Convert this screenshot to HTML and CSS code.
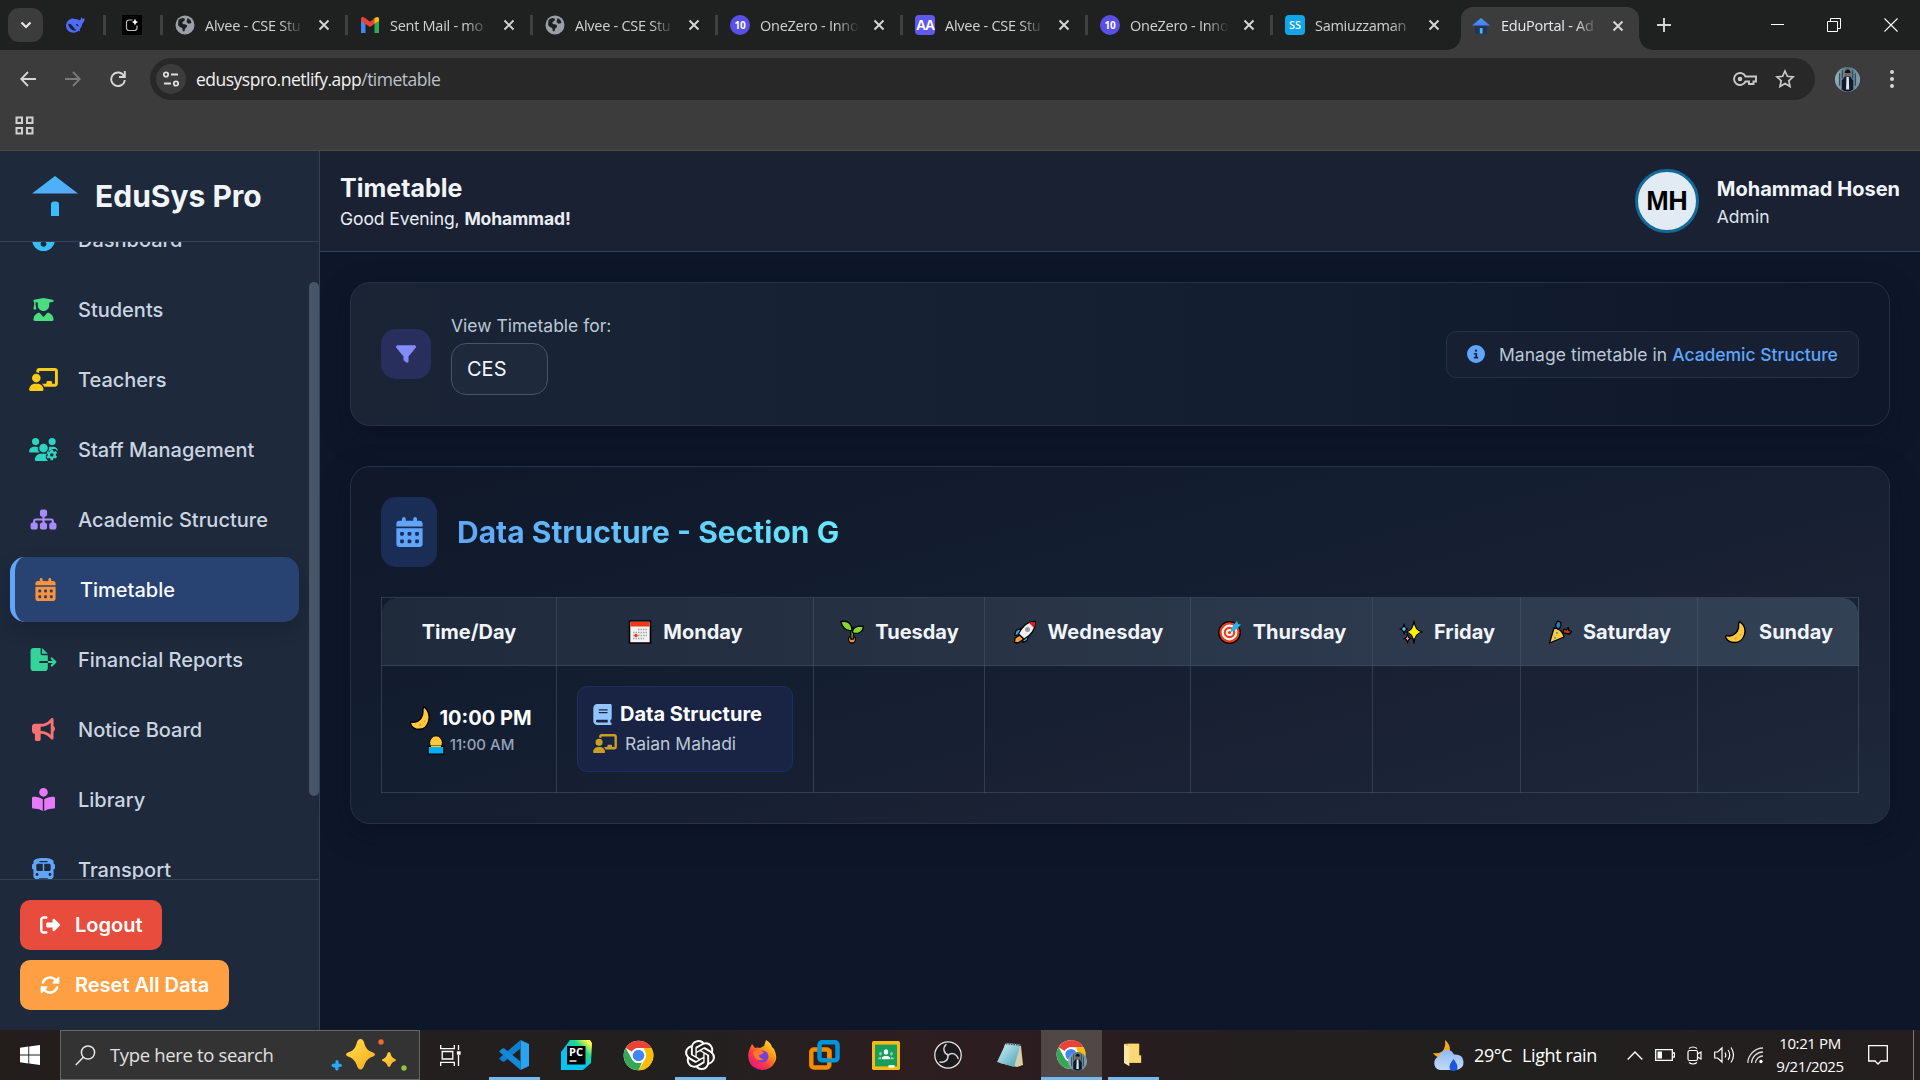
FILE: index.html
```html
<!DOCTYPE html>
<html lang="en">
<head>
<meta charset="utf-8">
<title>EduPortal - Admin</title>
<link rel="stylesheet" href="styles.css">
</head>
<body>
<svg class="sprite" aria-hidden="true">
<defs>
<linearGradient id="g-roof" x1="0" y1="0" x2="1" y2="1"><stop offset="0" stop-color="#38bdf8"/><stop offset="1" stop-color="#60a5fa"/></linearGradient>
<linearGradient id="g-house" x1="0" y1="0" x2="0" y2="1"><stop offset="0" stop-color="#3b9bf8"/><stop offset="1" stop-color="#4f7df8"/></linearGradient>
<linearGradient id="g-gold" x1="0" y1="0" x2="1" y2="1"><stop offset="0" stop-color="#ffe14a"/><stop offset="1" stop-color="#f9a81c"/></linearGradient>
<linearGradient id="g-pc" x1="0" y1="1" x2="1" y2="0"><stop offset=".45" stop-color="#07c3f2"/><stop offset=".7" stop-color="#21d789"/><stop offset=".9" stop-color="#fcf84a"/></linearGradient>
<linearGradient id="g-fox" x1="1" y1="0" x2=".2" y2="1"><stop offset="0" stop-color="#fff44f"/><stop offset=".4" stop-color="#ff980e"/><stop offset=".7" stop-color="#ff3647"/><stop offset="1" stop-color="#e31587"/></linearGradient>
<linearGradient id="g-cloud" x1="0" y1="0" x2="0" y2="1"><stop offset="0" stop-color="#8fbaf4"/><stop offset="1" stop-color="#c3dafc"/></linearGradient>
<linearGradient id="g-note" x1="0" y1="0" x2="1" y2="1"><stop offset="0" stop-color="#d9f3f8"/><stop offset="1" stop-color="#3f9fb6"/></linearGradient>
<linearGradient id="g-photo" x1="0" y1="0" x2="1" y2="0"><stop offset="0" stop-color="#9db4bd"/><stop offset=".5" stop-color="#4c6f80"/><stop offset="1" stop-color="#86a3ae"/></linearGradient>

<symbol id="i-gauge" viewBox="0 0 512 512"><path fill-rule="evenodd" d="M256 0a256 256 0 1 1 0 512A256 256 0 1 1 256 0zM232 352V150h48V296a64 64 0 1 1-48 0z"/></symbol>
<symbol id="i-student" viewBox="0 0 448 512"><path d="M219.3 .5c3.1-.6 6.3-.6 9.4 0l200 40C439.9 42.7 448 52.6 448 64s-8.1 21.3-19.3 23.5L352 102.9V160c0 70.7-57.3 128-128 128s-128-57.3-128-128V102.9L48 93.3v65.1l15.7 78.4c.9 4.7-.3 9.6-3.3 13.3s-7.6 5.9-12.4 5.9H16c-4.8 0-9.3-2.1-12.4-5.9s-4.3-8.6-3.3-13.3L16 158.4V86.6C6.5 83.3 0 74.3 0 64C0 52.6 8.1 42.7 19.3 40.5l200-40zM111.9 327.7c10.5-3.4 21.8 .4 29.4 8.5l71 75.5c6.3 6.7 17 6.7 23.3 0l71-75.5c7.6-8.1 18.9-11.9 29.4-8.5C401 348.6 448 409.4 448 481.3c0 17-13.8 30.7-30.7 30.7H30.7C13.8 512 0 498.2 0 481.3c0-71.9 47-132.7 111.9-153.6z"/></symbol>
<symbol id="i-teacher" viewBox="0 0 640 512"><path d="M160 64c0-35.3 28.7-64 64-64H576c35.3 0 64 28.7 64 64V352c0 35.3-28.7 64-64 64H336.8c-11.8-25.5-29.9-47.5-52.4-64H384V320c0-17.7 14.3-32 32-32h64c17.7 0 32 14.3 32 32v32h64V64L224 64v49.1C205.2 102.2 183.3 96 160 96V64zm0 64a96 96 0 1 1 0 192 96 96 0 1 1 0-192zM133.3 352h53.3C260.3 352 320 411.7 320 485.3c0 14.7-11.9 26.7-26.7 26.7H26.7C11.9 512 0 500.1 0 485.3C0 411.7 59.7 352 133.3 352z"/></symbol>
<symbol id="i-staff" viewBox="0 0 640 512"><path d="M144 160A80 80 0 1 0 144 0a80 80 0 1 0 0 160zm368 0A80 80 0 1 0 512 0a80 80 0 1 0 0 160zM0 298.7C0 310.4 9.6 320 21.3 320H234.7c.2 0 .4 0 .7 0c-26.6-23.5-43.3-57.8-43.3-96c0-7.6 .7-15 1.9-22.3c-13.600-6.300-28.700-9.700-44.600-9.700H106.700C47.800 192 0 239.800 0 298.700zM320 320a96 96 0 1 0 0-192 96 96 0 1 0 0 192zm106 -30a125 125 0 0 0 20-88c14-7 28-10 44-10h43c59 0 107 48 107 100l-30-20-20-28h-90l-18 32zM261.300 352C187.700 352 128 411.700 128 485.300c0 14.700 11.900 26.700 26.700 26.700H420a130 130 0 0 1-30-160z"/><path fill-rule="evenodd" d="M480 256h50l7 36 24 12 34-14 27 44-27 25v30l27 26-27 43-34-12-24 13-7 37h-50l-8-37-24-13-34 12-27-43 27-26v-30l-27-25 27-44 34 14 24-12zM505 338a38 38 0 1 0 0 76 38 38 0 1 0 0-76z"/></symbol>
<symbol id="i-sitemap" viewBox="0 0 576 512"><path d="M208 80c0-26.500 21.500-48 48-48h64c26.500 0 48 21.500 48 48v64c0 26.500-21.500 48-48 48h-8v40H464c30.900 0 56 25.100 56 56v32h8c26.500 0 48 21.500 48 48v64c0 26.500-21.500 48-48 48H464c-26.500 0-48-21.500-48-48V368c0-26.500 21.500-48 48-48h8V288c0-4.400-3.600-8-8-8H312v40h8c26.500 0 48 21.500 48 48v64c0 26.500-21.500 48-48 48H256c-26.500 0-48-21.500-48-48V368c0-26.500 21.500-48 48-48h8V280H112c-4.400 0-8 3.600-8 8v32h8c26.500 0 48 21.500 48 48v64c0 26.500-21.500 48-48 48H48c-26.500 0-48-21.500-48-48V368c0-26.500 21.500-48 48-48h8V288c0-30.900 25.100-56 56-56H264V192h-8c-26.500 0-48-21.500-48-48V80z"/></symbol>
<symbol id="i-calendar" viewBox="0 0 448 512"><path d="M128 0c17.700 0 32 14.300 32 32V64H288V32c0-17.700 14.300-32 32-32s32 14.300 32 32V64h48c26.500 0 48 21.500 48 48v48H0V112C0 85.500 21.500 64 48 64H96V32c0-17.700 14.300-32 32-32zM0 192H448V464c0 26.500-21.500 48-48 48H48c-26.500 0-48-21.500-48-48V192zm64 80v32c0 8.800 7.200 16 16 16h32c8.800 0 16-7.200 16-16V272c0-8.800-7.200-16-16-16H80c-8.800 0-16 7.200-16 16zm128 0v32c0 8.800 7.200 16 16 16h32c8.800 0 16-7.200 16-16V272c0-8.800-7.200-16-16-16H208c-8.800 0-16 7.200-16 16zm144-16c-8.800 0-16 7.200-16 16v32c0 8.800 7.200 16 16 16h32c8.800 0 16-7.200 16-16V272c0-8.800-7.200-16-16-16H336zM64 400v32c0 8.800 7.200 16 16 16h32c8.800 0 16-7.200 16-16V400c0-8.800-7.200-16-16-16H80c-8.800 0-16 7.200-16 16zm144-16c-8.800 0-16 7.200-16 16v32c0 8.800 7.200 16 16 16h32c8.800 0 16-7.200 16-16V400c0-8.800-7.200-16-16-16H208zm112 16v32c0 8.800 7.200 16 16 16h32c8.800 0 16-7.200 16-16V400c0-8.800-7.200-16-16-16H336c-8.800 0-16 7.200-16 16z"/></symbol>
<symbol id="i-export" viewBox="0 0 576 512"><path d="M0 64C0 28.700 28.700 0 64 0H224V128c0 17.700 14.300 32 32 32H384V288H216c-13.300 0-24 10.700-24 24s10.700 24 24 24H384V448c0 35.300-28.700 64-64 64H64c-35.300 0-64-28.700-64-64V64zM384 336V288H494.100l-39-39c-9.400-9.400-9.400-24.600 0-33.900s24.600-9.400 33.900 0l80 80c9.400 9.400 9.400 24.600 0 33.900l-80 80c-9.400 9.400-24.600 9.400-33.900 0s-9.400-24.600 0-33.900l39-39H384zm0-208H256V0L384 128z"/></symbol>
<symbol id="i-horn" viewBox="0 0 512 512"><path d="M480 32c0-12.900-7.800-24.600-19.800-29.600s-25.700-2.200-34.900 6.900L381.700 53c-48 48-113.100 75-181 75H192 160 64c-35.300 0-64 28.700-64 64v96c0 35.300 28.700 64 64 64l0 128c0 17.700 14.300 32 32 32h64c17.700 0 32-14.300 32-32V352l8.700 0c67.900 0 133 27 181 75l43.600 43.600c9.200 9.200 22.900 11.900 34.900 6.900s19.800-16.600 19.800-29.600V300.400c18.600-8.800 32-32.500 32-60.400s-13.400-51.600-32-60.400V32zm-64 76.700V240 371.300C357.200 317.800 280.500 288 200.700 288H192V192h8.700c79.800 0 156.500-29.800 215.300-83.300z"/></symbol>
<symbol id="i-reader" viewBox="0 0 512 512"><path d="M160 96a96 96 0 1 1 192 0A96 96 0 1 1 160 96zm80 152V512l-48.400-24.200c-20.900-10.400-43.500-17-66.800-19.300l-96-9.600C12.500 457.200 0 443.500 0 427V224c0-17.700 14.300-32 32-32H62.300c63.600 0 125.600 19.600 177.700 56zm32 264V248c52.100-36.400 114.100-56 177.700-56H480c17.700 0 32 14.300 32 32V427c0 16.400-12.500 30.200-28.800 31.800l-96 9.600c-23.200 2.300-45.900 8.900-66.800 19.300L272 512z"/></symbol>
<symbol id="i-bus" viewBox="0 0 512 512"><path d="M256 0C390.400 0 480 35.200 480 80V96l0 32c17.700 0 32 14.300 32 32v64c0 17.700-14.300 32-32 32l0 160c0 17.700-14.300 32-32 32v32c0 17.700-14.300 32-32 32H384c-17.700 0-32-14.300-32-32V448H160v32c0 17.700-14.300 32-32 32H96c-17.700 0-32-14.300-32-32l0-32c-17.700 0-32-14.300-32-32l0-160c-17.700 0-32-14.300-32-32V160c0-17.700 14.300-32 32-32h0V96h0V80C32 35.200 121.600 0 256 0zM96 160v96c0 17.700 14.300 32 32 32H240V128H128c-17.700 0-32 14.300-32 32zM272 288H384c17.700 0 32-14.300 32-32V160c0-17.700-14.300-32-32-32H272V288zM112 400a32 32 0 1 0 0-64 32 32 0 1 0 0 64zm288 0a32 32 0 1 0 0-64 32 32 0 1 0 0 64zM352 80c0-8.800-7.200-16-16-16H176c-8.800 0-16 7.200-16 16s7.200 16 16 16H336c8.800 0 16-7.200 16-16z"/></symbol>
<symbol id="i-logout" viewBox="0 0 512 512"><path d="M377.900 105.900L500.700 228.700c7.200 7.200 11.300 17.100 11.300 27.300s-4.100 20.100-11.300 27.300L377.900 406.100c-6.400 6.400-15 9.900-24 9.900c-18.700 0-33.900-15.200-33.900-33.900l0-62.100-128 0c-17.700 0-32-14.300-32-32l0-64c0-17.700 14.300-32 32-32l128 0 0-62.100c0-18.700 15.200-33.900 33.900-33.900c9 0 17.600 3.600 24 9.900zM160 96L96 96c-17.700 0-32 14.300-32 32l0 256c0 17.700 14.300 32 32 32l64 0c17.700 0 32 14.300 32 32s-14.300 32-32 32l-64 0c-53 0-96-43-96-96L0 128C0 75 43 32 96 32l64 0c17.700 0 32 14.300 32 32s-14.300 32-32 32z"/></symbol>
<symbol id="i-rotate" viewBox="0 0 512 512"><path d="M142.900 142.900c62.200-62.200 162.700-62.500 225.300-1L327 183c-6.900 6.900-8.900 17.200-5.200 26.200s12.500 14.800 22.200 14.800H463.500H472c13.300 0 24-10.700 24-24V72c0-9.700-5.800-18.500-14.800-22.200s-19.300-1.700-26.200 5.200L413.400 96.600c-87.600-86.500-228.700-86.200-315.800 1C73.200 122 55.600 150.700 44.800 181.400c-5.900 16.700 2.900 34.900 19.500 40.800s34.900-2.900 40.800-19.500c7.700-21.800 20.200-42.300 37.800-59.800zM16 312v7.600V440c0 9.700 5.800 18.500 14.800 22.200s19.300 1.700 26.200-5.200l41.600-41.600c87.600 86.500 228.700 86.200 315.800-1c24.400-24.400 42.100-53.100 52.900-83.700c5.900-16.700-2.900-34.900-19.500-40.800s-34.900 2.900-40.800 19.500c-7.700 21.800-20.200 42.300-37.800 59.800c-62.200 62.200-162.700 62.500-225.300 1L185 329c6.900-6.900 8.900-17.200 5.200-26.200s-12.500-14.800-22.200-14.800H40c-13.300 0-24 10.700-24 24z"/></symbol>
<symbol id="i-filter" viewBox="0 0 512 512"><path d="M3.900 54.900C10.500 40.900 24.500 32 40 32H472c15.500 0 29.500 8.900 36.100 22.900s4.600 30.500-5.200 42.500L320 320.900V448c0 12.100-6.800 23.200-17.700 28.600s-23.800 4.300-33.500-3l-64-48c-8.100-6-12.800-15.500-12.800-25.600V320.900L9 97.300C-.7 85.400-2.800 68.800 3.900 54.900z"/></symbol>
<symbol id="i-info" viewBox="0 0 512 512"><path d="M256 512A256 256 0 1 0 256 0a256 256 0 1 0 0 512zM216 336h24V272H216c-13.300 0-24-10.700-24-24s10.700-24 24-24h48c13.300 0 24 10.700 24 24v88h8c13.300 0 24 10.700 24 24s-10.700 24-24 24H216c-13.300 0-24-10.700-24-24s10.700-24 24-24zm40-208a32 32 0 1 1 0 64 32 32 0 1 1 0-64z"/></symbol>
<symbol id="i-book" viewBox="0 0 448 512"><path d="M96 0C43 0 0 43 0 96V416c0 53 43 96 96 96H384h32c17.700 0 32-14.300 32-32s-14.300-32-32-32V384c17.700 0 32-14.300 32-32V32c0-17.700-14.300-32-32-32H384 96zm0 384H352v64H96c-17.700 0-32-14.300-32-32s14.300-32 32-32zm32-240c0-8.800 7.200-16 16-16H336c8.800 0 16 7.200 16 16s-7.200 16-16 16H144c-8.800 0-16-7.200-16-16zm16 48H336c8.800 0 16 7.200 16 16s-7.200 16-16 16H144c-8.800 0-16-7.200-16-16s7.200-16 16-16z"/></symbol>

<symbol id="b-globe" viewBox="0 0 20 20"><circle cx="10" cy="10" r="9.500" fill="#9aa0a6"/><path d="M3.500 5q1.500-1.500 4-2l2.500.8-.5 2L7.500 7q-.5 2 1 2.300 2.500-.3 3.500 1.200.5 2-1.500 2.500l-1 3-1.500.5-.8-3.500q-2.700-.5-4.200-3zM12.500 3l3 2 1 3-3 .8-2-1.800z" fill="#1f2120"/></symbol>
<symbol id="b-x" viewBox="0 0 12 12"><path d="M1.500 1.500l9 9m0-9l-9 9" fill="none" stroke="#d5d8d6" stroke-width="1.900"/></symbol>
<symbol id="b-house" viewBox="0 0 18 18"><path d="M3 8h12v9H3z" fill="#253454"/><path d="M9 1l9 7.500H0z" fill="url(#g-house)"/><path d="M7.800 11h2.800v5.500H7.800z" fill="#38bdf8"/></symbol>

<symbol id="e-moon" viewBox="0 0 24 24"><path d="M15.500 1.500c10 7 5 21-5 21-5 0-8-3-9-5.500l1-1.500c7 2 13-4 12-11.500z" fill="#ffc83d" stroke="#000" stroke-width="1.400" stroke-linejoin="round"/><circle cx="16.500" cy="15" r="1" fill="#e9a52c"/><circle cx="11.500" cy="18.500" r="1.200" fill="#e9a52c"/></symbol>
<symbol id="e-cal" viewBox="0 0 24 24"><path d="M1.500 1h21v22h-21z" fill="#f2f2f2" stroke="#000" stroke-width="1.600"/><path d="M2.300 1.800h19.400V6.500H2.300z" fill="#f03a17"/><path d="M10 9.500h9M5 12.500h14M5 15.500h14M5 18.500h11" stroke="#a9a9a9" stroke-width="1.600" stroke-dasharray="1.600 .9"/><circle cx="8" cy="15.500" r="1.700" fill="#f03a17"/></symbol>
<symbol id="e-seed" viewBox="0 0 24 24"><g stroke="#000" stroke-width="1.300" stroke-linejoin="round"><circle cx="12" cy="19.500" r="3.500" fill="#f7894a"/><path d="M10.800 8h2.600v11h-2.600z" fill="#6cc516"/><path d="M12 10.500C6 11.500 2 7 .8 1.500c5.700-1 10.700.5 11.200 9z" fill="#86d72f"/><path d="M12.500 12.500c0-5.500 5-7 10.800-6 0 5.500-5.800 8.500-10.800 6z" fill="#86d72f"/></g></symbol>
<symbol id="e-rocket" viewBox="0 0 24 24"><g stroke="#000" stroke-width="1.300" stroke-linejoin="round"><path d="M8 8.500l-5 2-1.500 5 5-.5zM16 15.500l-2 5-4 2-.5-5z" fill="#1fb2e8"/><path d="M7 15l4 4-6 4-3.500-.5L2 18z" fill="#ff9a2e"/><path d="M22.500 1.500c0 7-4 14-11.500 17.500L5.500 14C9 7 15 1 22.500 1.500z" fill="#f0f0f0"/></g><path d="M16 2.700c2-.7 4-.9 6-.7 0 2-.4 4-1 6z" fill="#e81224"/><circle cx="14.500" cy="9.500" r="2.500" fill="#9b9b9b"/></symbol>
<symbol id="e-target" viewBox="0 0 24 24"><circle cx="11.500" cy="12.500" r="10.800" fill="#f03a17" stroke="#000" stroke-width="1.300"/><circle cx="11.500" cy="12.500" r="6.800" fill="none" stroke="#f4f4f4" stroke-width="2.200"/><circle cx="11.500" cy="12.500" r="2.600" fill="#f03a17" stroke="#f4f4f4" stroke-width="2"/><path d="M12 12.500l3-7 4-4.500 1 3 3 .5-4 4.500z" fill="#27b2ee"/></symbol>
<symbol id="e-spark" viewBox="0 0 24 24"><g stroke="#000" stroke-width="1.200" stroke-linejoin="round"><path d="M15 .8q1 10 8.300 11.200Q16 13 15 23.200 14 13 7 12 14 11 15 .8z" fill="#fff100"/><path d="M5 4q.5 4.500 4 5-3.500.5-4 5-.5-4.500-4-5 3.500-.5 4-5z" fill="#4cc2ff"/><path d="M8.500 14q.5 4 3.500 4.500-3 .5-3.500 4.500-.5-4-3.500-4.500 3-.5 3.500-4.500z" fill="#f28ab2"/></g></symbol>
<symbol id="e-party" viewBox="0 0 24 24"><g stroke="#000" stroke-width="1.300" stroke-linejoin="round"><path d="M6 8L1.500 23l14.500-6c-1-5-5-9-10-9z" fill="#ffc83d"/><path d="M9.500 1.200q3.500 0 3.500 3.500 0 3-3 4.500-2.500-2-2.500-4.500z" fill="#1f7fc0"/><path d="M14.500 13l1.500-4 2.500 1L20 7.500l1 3 2.500 1-2 2.500z" fill="#c13318"/></g><circle cx="9" cy="13" r="1" fill="#3a96dd"/><circle cx="7" cy="18" r="1" fill="#3a96dd"/></symbol>
<symbol id="e-sunrise" viewBox="0 0 24 24"><circle cx="12" cy="9.500" r="8.500" fill="#ffc83d" stroke="#000" stroke-width="1.200"/><path d="M1.500 13.500h21v9.500h-21z" fill="#00b0f4" stroke="#000" stroke-width="1.600"/><path d="M5.500 13h13v1.500h-13z" fill="#ffc83d"/></symbol>

<symbol id="t-chrome" viewBox="0 0 48 48"><circle cx="24" cy="24" r="23" fill="#fff"/><path d="M24 1a23 23 0 0 1 20 11.500H24A11.500 11.500 0 0 0 14 18.200L4.100 12.500A23 23 0 0 1 24 1z" fill="#ea4335"/><path d="M44 12.500A23 23 0 0 1 24 47l10-17.200a11.500 11.500 0 0 0 0-11.600L32 12.500z" fill="#fbbc04"/><path d="M4.100 12.500L14 29.800A11.500 11.500 0 0 0 24 35.500q3 0 5.500-1.200L24 47A23 23 0 0 1 4.100 12.500z" fill="#34a853"/><circle cx="24" cy="24" r="11.500" fill="#fff"/><circle cx="24" cy="24" r="9" fill="#4285f4"/></symbol>
<symbol id="t-photo" viewBox="0 0 24 24"><circle cx="12" cy="12" r="12" fill="url(#g-photo)"/><path d="M4.500 6v12M19.500 6v12M7 3v8M17 3v8" stroke="#263f4d" stroke-width="1"/><path d="M6.500 21.500V13l3-4h5l3 4v8.500q-5.500 4-11 0z" fill="#111a28"/><path d="M11 9.500h2.300l.3 12h-3z" fill="#dfe6ef"/><circle cx="12.200" cy="6.200" r="2.600" fill="#8a5f50"/><path d="M9.500 5.800q0-3.500 2.700-3.500t2.700 3.500z" fill="#151515"/></symbol>
</defs>
</svg>

<div class="browser">
  <div class="tabstrip">
    <div class="tab-menu"><svg width="12" height="8" viewBox="0 0 12 8"><path d="M1.500 1.500L6 6l4.500-4.500" fill="none" stroke="#e6e6e6" stroke-width="2.200"/></svg></div>
    <div class="pinned whale"><svg width="20" height="18" viewBox="0 0 24 20"><path d="M23.500 2c-2 1-3.200.5-4-1.500-.5 2-.2 3-1.800 4C16.500 4.500 15 2.500 12.500 3 10 1.500 7 2 4.500 4-1 9 1 16 6 18.300c4 1.700 8 .8 10.500-1.300 2 .8 2 .2 1-1.500 3-3.500 3-6 3.500-7.500 1.500-1 2.700-3.500 2.500-6z" fill="#4d6bfe"/><path d="M4 8.500c3-.5 5 2 6.500 4.500s2.500 2.500 3.500 3c-3 1.500-6 0-8-2.500s-2-3.500-2-5zM13 9c2-.5 3.500 1 3 3-1-.5-2.500-1.500-3-3z" fill="#1f2120"/></svg></div>
    <div class="pinned spark"><svg width="20" height="20" viewBox="0 0 20 20"><path d="M0 0h20v20H0z" fill="#000"/><path d="M10.500 5H7a2.500 2.500 0 0 0-2.500 2.500v5.500A2.500 2.500 0 0 0 7 15.500h5.500A2.500 2.500 0 0 0 15 13v-2.500" fill="none" stroke="#bbb" stroke-width="1.200"/><path d="M13 3.500q.4 3 3 3.500-2.600.5-3 3.500-.4-3-3-3.500 2.600-.5 3-3.500z" fill="#fff"/></svg></div>
    <div class="tab"><svg class="fav" viewBox="0 0 20 20"><use href="#b-globe"/></svg><span class="tab-title">Alvee - CSE Stu</span><svg class="tab-x"><use href="#b-x"/></svg></div>
    <div class="tab"><svg class="fav" viewBox="0 0 20 20"><path d="M1 18V4l4.500 3v11z" fill="#4285f4"/><path d="M14.500 18V7L19 4v14z" fill="#34a853"/><path d="M1 6V3.800C1 2 3 1.400 4.400 2.500L10 6.700l5.600-4.200 0 5.500L10 12z" fill="#ea4335"/><path d="M14.500 8.600V3.300l1-.8C17 1.400 19 2 19 3.800V6z" fill="#fbbc04"/></svg><span class="tab-title">Sent Mail - mo</span><svg class="tab-x"><use href="#b-x"/></svg></div>
    <div class="tab"><svg class="fav" viewBox="0 0 20 20"><use href="#b-globe"/></svg><span class="tab-title">Alvee - CSE Stu</span><svg class="tab-x"><use href="#b-x"/></svg></div>
    <div class="tab"><span class="fav badge-ten">10</span><span class="tab-title">OneZero - Inno</span><svg class="tab-x"><use href="#b-x"/></svg></div>
    <div class="tab"><span class="fav badge-aa">AA</span><span class="tab-title">Alvee - CSE Stu</span><svg class="tab-x"><use href="#b-x"/></svg></div>
    <div class="tab"><span class="fav badge-ten">10</span><span class="tab-title">OneZero - Inno</span><svg class="tab-x"><use href="#b-x"/></svg></div>
    <div class="tab"><span class="fav badge-ss">SS</span><span class="tab-title">Samiuzzaman</span><svg class="tab-x"><use href="#b-x"/></svg></div>
    <div class="tab active"><svg class="fav" viewBox="0 0 18 18"><use href="#b-house"/></svg><span class="tab-title">EduPortal - Ad</span><svg class="tab-x"><use href="#b-x"/></svg></div>
    <div class="new-tab"><svg width="14" height="14" viewBox="0 0 14 14"><path d="M7 0v14M0 7h14" stroke="#d5d8d6" stroke-width="1.900"/></svg></div>
    <div class="window-controls">
      <svg width="13" height="13" viewBox="0 0 13 13"><path d="M0 5.500h13" stroke="#fff"/></svg>
      <svg width="14" height="14" viewBox="0 0 14 14"><path d="M.5 3.500h10v10H.5zM3.500 3V.5h10v10H11" fill="none" stroke="#fff"/></svg>
      <svg width="14" height="14" viewBox="0 0 14 14"><path d="M.5.5l13 13m0-13l-13 13" stroke="#fff" stroke-width="1.100"/></svg>
    </div>
  </div>
  <div class="toolbar">
    <div class="nav-buttons">
      <svg width="16" height="16" viewBox="0 0 16 16"><path d="M16 8H1.500M8 1L1.200 8 8 15" fill="none" stroke="#d6d6d6" stroke-width="1.800"/></svg>
      <svg width="16" height="16" viewBox="0 0 16 16"><path d="M0 8h14.500M8 1l6.800 7L8 15" fill="none" stroke="#7b7b7b" stroke-width="1.800"/></svg>
      <svg width="16" height="16" viewBox="0 0 16 16"><path d="M14 5A6.800 6.800 0 1 0 14.800 9" fill="none" stroke="#d6d6d6" stroke-width="1.900"/><path d="M14.800 0v6H9" fill="none" stroke="#d6d6d6" stroke-width="1.900"/></svg>
    </div>
    <div class="omnibox">
      <span class="site-chip"><svg width="16" height="16" viewBox="0 0 16 16" fill="none" stroke="#dedede" stroke-width="1.800"><circle cx="3" cy="3.500" r="2.200"/><path d="M8 3.500h7M1 12.500h7"/><circle cx="13" cy="12.500" r="2.200"/></svg></span>
      <span class="url">edusyspro.netlify.app<span class="path">/timetable</span></span>
      <svg class="key" width="24" height="14" viewBox="0 0 24 14"><path d="M12.500 4.500a6 6 0 1 0 0 5H16V12h4.500V9.500H23v-5z" fill="none" stroke="#c9c9c9" stroke-width="1.900"/><circle cx="7" cy="7" r="2.300" fill="#c9c9c9"/></svg>
      <svg class="star" width="20" height="20" viewBox="0 0 20 20"><path d="M10 2l2.400 5.300 5.700.6-4.300 3.900 1.200 5.700-5-2.900-5 2.900 1.200-5.700L1.900 7.900l5.700-.6z" fill="none" stroke="#c9c9c9" stroke-width="1.700"/></svg>
    </div>
    <svg class="profile" width="25" height="25"><use href="#t-photo"/></svg>
    <svg class="dots" width="4" height="18" viewBox="0 0 4 18" fill="#d6d6d6"><circle cx="2" cy="2" r="2"/><circle cx="2" cy="9" r="2"/><circle cx="2" cy="16" r="2"/></svg>
  </div>
  <div class="bookmarks"><svg width="19" height="19" viewBox="0 0 19 19" fill="none" stroke="#d0d0d0" stroke-width="2"><path d="M1.500 1.500h5.500v5.500H1.500zM12 1.500h5.500v5.500H12zM1.500 12h5.500v5.500H1.500zM12 12h5.500v5.500H12z"/></svg></div>
</div>

<div class="app">
  <aside class="sidebar">
    <div class="brand"><svg width="46" height="40" viewBox="0 0 46 40"><path d="M23 0l23 17.500H0z" fill="url(#g-roof)"/><path d="M19 28.500q0-3 3-3h2q3 0 3 3V40h-8z" fill="#38bdf8"/></svg><span>EduSys Pro</span></div>
    <div class="menu-wrap">
      <nav class="menu">
        <a class="item sky"><svg><use href="#i-gauge"/></svg><span>Dashboard</span></a>
        <a class="item green"><svg><use href="#i-student"/></svg><span>Students</span></a>
        <a class="item yellow"><svg><use href="#i-teacher"/></svg><span>Teachers</span></a>
        <a class="item teal"><svg><use href="#i-staff"/></svg><span>Staff Management</span></a>
        <a class="item violet"><svg><use href="#i-sitemap"/></svg><span>Academic Structure</span></a>
        <a class="item orange current"><svg><use href="#i-calendar"/></svg><span>Timetable</span></a>
        <a class="item emerald"><svg><use href="#i-export"/></svg><span>Financial Reports</span></a>
        <a class="item red"><svg><use href="#i-horn"/></svg><span>Notice Board</span></a>
        <a class="item pink"><svg><use href="#i-reader"/></svg><span>Library</span></a>
        <a class="item blue"><svg><use href="#i-bus"/></svg><span>Transport</span></a>
      </nav>
      <div class="scroll-track"><div class="scroll-thumb"></div></div>
    </div>
    <div class="side-foot">
      <button class="btn logout"><svg><use href="#i-logout"/></svg>Logout</button>
      <button class="btn reset"><svg><use href="#i-rotate"/></svg>Reset All Data</button>
    </div>
  </aside>

  <main class="main">
    <header class="topbar">
      <div class="heading"><h1>Timetable</h1><p>Good Evening, <b>Mohammad!</b></p></div>
      <div class="user"><div class="avatar">MH</div><div class="user-text"><b>Mohammad Hosen</b><span>Admin</span></div></div>
    </header>
    <section class="card filter-card">
      <div class="filter-icon"><svg width="20" height="20"><use href="#i-filter"/></svg></div>
      <div class="filter-field"><label>View Timetable for:</label><div class="select">CES</div></div>
      <div class="hint"><svg width="18" height="18"><use href="#i-info"/></svg><span>Manage timetable in <a>Academic Structure</a></span></div>
    </section>
    <section class="card schedule-card">
      <div class="schedule-head"><div class="schedule-icon"><svg width="27" height="30"><use href="#i-calendar"/></svg></div><h2>Data Structure - Section G</h2></div>
      <table class="schedule">
        <colgroup><col class="c-time"><col class="c-mon"><col class="c-tue"><col class="c-wed"><col class="c-thu"><col class="c-fri"><col class="c-sat"><col class="c-sun"></colgroup>
        <thead><tr>
          <th>Time/Day</th>
          <th><span class="day"><svg><use href="#e-cal"/></svg>Monday</span></th>
          <th><span class="day"><svg><use href="#e-seed"/></svg>Tuesday</span></th>
          <th><span class="day"><svg><use href="#e-rocket"/></svg>Wednesday</span></th>
          <th><span class="day"><svg><use href="#e-target"/></svg>Thursday</span></th>
          <th><span class="day"><svg><use href="#e-spark"/></svg>Friday</span></th>
          <th><span class="day"><svg><use href="#e-party"/></svg>Saturday</span></th>
          <th><span class="day"><svg><use href="#e-moon"/></svg>Sunday</span></th>
        </tr></thead>
        <tbody><tr>
          <td><div class="time"><div class="from"><svg width="23" height="26" viewBox="0 0 24 24" preserveAspectRatio="none"><use href="#e-moon"/></svg>10:00 PM</div><div class="to"><svg width="18" height="20" viewBox="0 0 24 24" preserveAspectRatio="none"><use href="#e-sunrise"/></svg>11:00 AM</div></div></td>
          <td><div class="slot"><div class="subject"><svg width="19" height="21"><use href="#i-book"/></svg>Data Structure</div><div class="lecturer"><svg width="24" height="19"><use href="#i-teacher"/></svg>Raian Mahadi</div></div></td>
          <td></td><td></td><td></td><td></td><td></td><td></td>
        </tr></tbody>
      </table>
    </section>
  </main>
</div>

<footer class="taskbar">
  <div class="start"><svg width="20" height="20" viewBox="0 0 20 20" fill="#fff"><path d="M0 2.800L8.300 1.600V9.500H0zM9.200 1.500L20 0v9.500H9.200zM0 10.500h8.300v7.900L0 17.200zM9.200 10.500H20V20L9.200 18.500z"/></svg></div>
  <div class="search">
    <svg width="21" height="21" viewBox="0 0 21 21" fill="none" stroke="#e8e8e8" stroke-width="1.500"><circle cx="13" cy="7.500" r="6.600"/><path d="M8.300 12.300L.8 20"/></svg>
    <span>Type here to search</span>
    <svg class="stars" width="76" height="32" viewBox="0 0 76 32"><path d="M29.500 0q3 0 4 5 2 6 6 7.500 4.500 1.500 4.500 3t-4.500 3q-4 2-6 7-1.500 5-4 5t-4-5q-2-5-6-7-4.500-1.500-4.500-3t4.500-3q4-1.500 6-7.500 1-5 4-5z" fill="url(#g-gold)"/><path d="M58 13q1.500 0 2 3 .8 3 3 3.500 2 .5 2 1.500t-2 1.500q-2 1-3 3-.7 2.500-2 2.500t-2-2.500q-1-2-3-3-2-.5-2-1.500t2-1.500q2-.5 3-3.500.5-3 2-3z" fill="url(#g-gold)"/><path d="M6 21q2 0 1.500 3.500Q11 25 11 26.500T7.500 28q.5 4-2 3.500Q4 31 4 28.500 0 28 .5 26t4-1.500Q4 21 6 21z" fill="#29a9f5"/><circle cx="50" cy="3" r="2.700" fill="#f4692a"/><circle cx="73" cy="29" r="2.700" fill="#8cc63f"/></svg>
  </div>
  <div class="task taskview"><svg width="21" height="21" viewBox="0 0 21 21" fill="none" stroke="#fff" stroke-width="1.300"><path d="M.7 0v3.700h13.600V0M.7 21v-3.700h13.600V21M2.200 6.500h10.600v7.500H2.200zM18.500 0v5M18.500 10v11"/><path d="M17.500 7h2.500v2h-2.500z" fill="#fff"/></svg></div>
  <div class="task open"><svg width="30" height="30" viewBox="0 0 30 30"><path d="M21.500 0L30 4v22l-8.500 4z" fill="#2aa3f0"/><path d="M21.500 0v8.500L5 21.800l-1.700-.3L0 18.500z" fill="#0d7fcf"/><path d="M21.500 30v-8.500L5 8.200l-1.700.3L0 11.500z" fill="#1489d8"/></svg></div>
  <div class="task"><svg width="31" height="30" viewBox="0 0 31 30"><path d="M9 0h20l2 3-1 20-8 7H0V12z" fill="url(#g-pc)"/><path d="M6 6h18.500v18.500H6z" fill="#000"/><path d="M8.500 21h7" stroke="#fff" stroke-width="1.400"/><text x="8" y="15.500" font-size="11" font-weight="700" font-family="Open Sans" fill="#fff">PC</text></svg></div>
  <div class="task"><svg width="31" height="31"><use href="#t-chrome"/></svg></div>
  <div class="task open"><svg width="30" height="30" viewBox="0 0 24 24" fill="#fff"><path d="M22.282 9.821a5.985 5.985 0 0 0-.516-4.911 6.046 6.046 0 0 0-6.510-2.900A6.065 6.065 0 0 0 4.981 4.182a5.985 5.985 0 0 0-3.998 2.900 6.046 6.046 0 0 0 .743 7.097 5.980 5.980 0 0 0 .511 4.911 6.051 6.051 0 0 0 6.515 2.900A5.985 5.985 0 0 0 13.260 24a6.056 6.056 0 0 0 5.772-4.206 5.989 5.989 0 0 0 3.998-2.900 6.056 6.056 0 0 0-.748-7.073zm-9.022 12.608a4.476 4.476 0 0 1-2.876-1.041l.142-.080 4.778-2.758a.795.795 0 0 0 .393-.681v-6.737l2.020 1.169a.071.071 0 0 1 .038.052v5.583a4.504 4.504 0 0 1-4.495 4.494zm-9.661-4.125a4.471 4.471 0 0 1-.535-3.014l.142.085 4.783 2.758a.771.771 0 0 0 .781 0l5.843-3.369v2.332a.080.080 0 0 1-.033.062L9.740 19.950a4.499 4.499 0 0 1-6.141-1.646zM2.341 7.896a4.485 4.485 0 0 1 2.366-1.973V11.600a.766.766 0 0 0 .388.677l5.814 3.354-2.020 1.169a.076.076 0 0 1-.071 0l-4.830-2.787A4.504 4.504 0 0 1 2.341 7.872zm16.596 3.856L13.104 8.364 15.119 7.200a.076.076 0 0 1 .071 0l4.830 2.791a4.494 4.494 0 0 1-.677 8.104v-5.677a.790.790 0 0 0-.407-.667zm2.011-3.023l-.142-.085-4.774-2.782a.776.776 0 0 0-.785 0L9.409 9.230V6.897a.066.066 0 0 1 .028-.062l4.830-2.787a4.499 4.499 0 0 1 6.680 4.660zM8.307 12.863l-2.020-1.164a.080.080 0 0 1-.038-.057V6.074a4.499 4.499 0 0 1 7.376-3.454l-.142.081L8.704 5.459a.795.795 0 0 0-.393.681zm1.098-2.365l2.602-1.500 2.607 1.500v2.999l-2.597 1.500-2.607-1.500Z"/></svg></div>
  <div class="task"><svg width="29" height="30" viewBox="0 0 29 30"><path d="M2 8l2-4 3 4q3-1 5 0l4-2 2-6q5 3 6 7l2 2q4 8 1 13-4 8-13 8-10-1-13-9Q-1 14 2 8z" fill="url(#g-fox)"/><circle cx="14.500" cy="16.500" r="6" fill="#7a3fd8"/><path d="M5 12q5-3 8-1l3 1q-2 3-5 3 0 4 5 4-5 3-9-1-2-3-2-6z" fill="#ff7a2a"/></svg></div>
  <div class="task"><svg width="31" height="30" viewBox="0 0 31 30" fill="none" stroke-width="4.500"><rect x="2.300" y="9.500" width="18" height="18" rx="2.500" stroke="#f38b00"/><rect x="10.500" y="2.300" width="18" height="18" rx="2.500" stroke="#0095d9"/><path d="M20.300 9.500v9" stroke="#f38b00"/></svg></div>
  <div class="task"><svg width="28" height="29" viewBox="0 0 28 24" preserveAspectRatio="none"><rect y="0" width="28" height="24" rx="1.500" fill="#f9ba16"/><path d="M3 3h22v18H3z" fill="#159f5b"/><circle cx="14" cy="9" r="2.200" fill="#fff"/><circle cx="8.500" cy="10.500" r="1.400" fill="#8ed0ab"/><circle cx="19.500" cy="10.500" r="1.400" fill="#8ed0ab"/><path d="M9.500 15q0-2.500 4.500-2.500t4.500 2.500z" fill="#fff"/><path d="M6 15q0-1.700 3-1.700v1.700zM22 15q0-1.700-3-1.700v1.700z" fill="#8ed0ab"/><path d="M16.500 20h6v2h-6z" fill="#fff"/></svg></div>
  <div class="task"><svg width="28" height="28" viewBox="0 0 28 28"><circle cx="14" cy="14" r="13.200" fill="#1c191c" stroke="#e6e6e6" stroke-width="1.300"/><g fill="none" stroke="#cfcfcf" stroke-width="1.500" stroke-linecap="round"><path d="M12 3.500C8.500 7 9.500 12.500 14.500 14"/><path d="M12 3.500C8.500 7 9.500 12.500 14.500 14" transform="rotate(120 14 14)"/><path d="M12 3.500C8.500 7 9.500 12.500 14.500 14" transform="rotate(240 14 14)"/></g></svg></div>
  <div class="task"><svg width="28" height="28" viewBox="0 0 28 28"><path d="M9 3L25 5l2 19-6 2-17-4z" fill="#d9cda5"/><path d="M10 2l14.500 1.500L18 26 1 21z" fill="url(#g-note)"/><path d="M10 2.500l15 1.500" stroke="#555" stroke-width="2" stroke-dasharray="1.500 1"/></svg></div>
  <div class="task open focused"><svg width="31" height="33" viewBox="0 0 31 33"><use href="#t-chrome" width="30" height="31"/><use href="#t-photo" x="12" y="13" width="19" height="19"/></svg></div>
  <div class="task open folder"><svg width="18" height="26" viewBox="0 0 20 27"><path d="M1 1h16v13h2v8H6L1 20z" fill="#e9b94a"/><path d="M4 1h12.500v13H19v8H6z" fill="#fbd873"/><path d="M0 1l6 4v21l-6-3.500z" fill="#ffe8a6"/></svg></div>
  <div class="tray">
    <div class="weather"><svg width="31" height="31" viewBox="0 0 31 31"><path d="M12 0q5 4 5 10 0 6-6 8-7 1-11-5 9 1 11-4 2-4 1-9z" fill="#f6a821"/><path d="M7 30a7 7 0 0 1-1-13.500 8 8 0 0 1 15-2q9-.5 9.500 7T23 30z" fill="url(#g-cloud)"/><path d="M20.500 19q4 5 4 8a4 4 0 0 1-8 0q0-3 4-8z" fill="#1b56e0"/></svg><span>29°C</span><span>Light rain</span></div>
    <div class="tray-icons">
      <svg width="16" height="9" viewBox="0 0 16 9"><path d="M.7 8.500L8 1l7.300 7.500" fill="none" stroke="#fff" stroke-width="1.400"/></svg>
      <svg width="20" height="12" viewBox="0 0 20 12"><path d="M.7.700h16.600v10.600H.7zM18 4h1.500v4H18" fill="none" stroke="#fff" stroke-width="1.300"/><path d="M2.500 2.500H7v7H2.500z" fill="#fff"/></svg>
      <svg width="15" height="19" viewBox="0 0 15 19" fill="none" stroke="#fff" stroke-width="1.200"><rect x="1" y="4.500" width="9.500" height="10" rx="1.500"/><path d="M10.500 8l3.500-2v7l-3.500-2M2 2.500q4-3 8 0M2 16.500q4 3 8 0"/></svg>
      <svg width="21" height="18" viewBox="0 0 21 18" fill="none" stroke="#fff" stroke-width="1.200"><path d="M.7 6h3L8 2v14l-4.300-4h-3zM11 6.500q1.500 2.500 0 5M14 4q3.500 5 0 10M17 1.500q5 7.500 0 15"/></svg>
      <svg width="17" height="17" viewBox="0 0 17 17" fill="none" stroke="#d8d8d8" stroke-width="1.300"><path d="M.8 16A15.500 15.500 0 0 1 16 1M4.500 16A11.500 11.500 0 0 1 16 5M8.500 16A7.500 7.500 0 0 1 16 9"/><circle cx="14" cy="14.500" r="1.700" fill="#fff" stroke="none"/></svg>
    </div>
    <div class="clock"><span>10:21 PM</span><span>9/21/2025</span></div>
    <svg class="notif" width="20" height="20" viewBox="0 0 20 20"><path d="M.7.700h18.600v15.300H13l-3 3-3-3H.7z" fill="none" stroke="#fff" stroke-width="1.300"/></svg>
    <div class="peek"></div>
  </div>
</footer>
</body>
</html>
```

FILE: styles.css
```css
* { box-sizing: border-box; }
body { margin: 0; width: 1920px; height: 1080px; overflow: hidden; display: flex; flex-direction: column; background: #0f172a; font-family: Inter, sans-serif; color: #f1f5f9; }
svg { display: block; flex: none; }
.sprite { position: absolute; width: 0; height: 0; }

/* Browser frame */
.browser { height: 151px; background: #3c3c3c; border-bottom: 1px solid #4a4a47; font-family: "Open Sans", sans-serif; }
.tabstrip { height: 50px; display: flex; align-items: center; background: #1f2120; padding-left: 8px; }
.tab-menu { width: 35px; height: 34px; border-radius: 11px; background: #3c3c3c; display: flex; align-items: center; justify-content: center; }
.pinned { height: 20px; display: flex; align-items: center; justify-content: center; border-right: 3px solid #3f4140; }
.whale { width: 63px; padding-left: 4px; }
.spark { width: 57px; padding-right: 3px; }
.tab { width: 185px; height: 50px; display: flex; align-items: center; padding-left: 11px; position: relative; }
.tab + .tab::before { content: ""; width: 3px; height: 20px; background: #3f4140; position: absolute; left: -3px; top: 15px; }
.fav { width: 20px; height: 20px; flex: none; margin-left: 1px; }
.tab-title { width: 101px; margin-left: 10px; font-size: 14.5px; letter-spacing: -0.27px; color: #cfd2d0; white-space: nowrap; -webkit-mask-image: linear-gradient(90deg, #000 75%, transparent 98%); mask-image: linear-gradient(90deg, #000 75%, transparent 98%); }
.tab-x { width: 12px; height: 12px; margin-left: 12px; }
.badge-ten, .badge-aa, .badge-ss { display: flex; align-items: center; justify-content: center; color: #fff; font-weight: 700; }
.badge-ten { border-radius: 50%; background: #5a50e8; font-size: 10px; letter-spacing: -0.3px; }
.badge-aa { border-radius: 4px; background: #6159ee; font: 700 14px "Liberation Sans", sans-serif; letter-spacing: -1px; }
.badge-ss { border-radius: 4px; background: #0ea5e9; font-size: 11px; font-weight: 600; padding-bottom: 2px; }
.tab.active { width: 178px; height: 43px; margin: 7px 0 0 3px; border-radius: 12px 12px 0 0; background: #3c3c3c; padding: 0 0 6px 10px; }
.tab.active::before { display: none; }
.tab.active::after { content: ""; position: absolute; left: -14px; right: -14px; bottom: 0; height: 14px; background: radial-gradient(circle at 0 0, transparent 13.500px, #3c3c3c 14px) left / 14px 14px no-repeat, radial-gradient(circle at 100% 0, transparent 13.500px, #3c3c3c 14px) right / 14px 14px no-repeat; }
.active .tab-title { color: #e8eaed; margin-left: 11px; width: 99px; }
.active .fav { width: 18px; height: 18px; }
.new-tab { margin-left: 18px; }
.window-controls { display: flex; margin-left: auto; gap: 43px; padding-right: 22px; align-items: center; }
.toolbar { height: 58px; display: flex; align-items: center; background: #3c3c3c; }
.nav-buttons { width: 150px; display: flex; gap: 29px; padding-left: 20px; }
.omnibox { width: 1665px; height: 42px; border-radius: 21px; background: #282828; display: flex; align-items: center; padding-left: 6px; }
.site-chip { width: 30px; height: 30px; border-radius: 50%; background: #3c3c3c; display: flex; align-items: center; justify-content: center; }
.url { margin-left: 10px; font-size: 17.500px; letter-spacing: -0.5px; color: #f0f0f0; }
.path { color: #bdc1c6; }
.key { margin-left: auto; }
.star { margin: 0 20px 0 18px; }
.profile { margin-left: 20px; }
.dots { margin-left: 30px; }
.bookmarks { padding: 8px 0 0 15px; }

/* Application */
.app { height: 879px; display: flex; }
.sidebar { width: 320px; background: #1e293b; border-right: 1px solid #334155; display: flex; flex-direction: column; }
.brand { height: 91px; border-bottom: 1px solid #334155; display: flex; align-items: center; gap: 17px; padding-left: 32px; font-size: 30px; font-weight: 700; }
.menu-wrap { height: 637px; overflow: hidden; display: flex; }
.menu { width: 309px; display: flex; flex-direction: column; gap: 5px; margin-top: -35px; padding: 0 10px; }
.item { height: 65px; flex: none; display: flex; align-items: center; gap: 19px; padding-left: 19px; border-radius: 15px; font-size: 20px; font-weight: 500; }
.item svg { width: 29px; height: 23px; fill: currentColor; }
.item span { color: #cbd5e1; margin-left: 1px; }
.item.current { background: #284371; border-left: 5px solid #60a5fa; padding-left: 16px; box-shadow: 0 8px 16px rgba(10, 18, 38, .25); }
.item.current span { color: #f8fafc; }
.sky { color: #38bdf8; } .green { color: #4ade80; } .yellow { color: #facc15; } .teal { color: #2dd4bf; }
.violet { color: #a78bfa; } .orange { color: #fb923c; } .emerald { color: #34d399; } .red { color: #f87171; }
.pink { color: #e879f9; } .blue { color: #60a5fa; }
.scroll-track { width: 10px; padding-top: 40px; }
.scroll-thumb { height: 514px; border-radius: 5px; background: #475569; }
.side-foot { flex: 1; border-top: 1px solid #334155; display: flex; flex-direction: column; align-items: flex-start; gap: 10px; padding: 20px; }
.btn { height: 50px; border: 0; border-radius: 10px; color: #fff; font: 600 20px Inter, sans-serif; display: flex; align-items: center; gap: 15px; padding: 0 20px; white-space: nowrap; }
.btn svg { width: 20px; height: 20px; fill: #fff; }
.logout { background: #e74c3c; width: 142px; }
.reset { background: #ff9f43; width: 209px; }

.main { flex: 1; display: flex; flex-direction: column; background: #0e172a; }
.topbar { height: 101px; background: #1a2133; border-bottom: 1px solid #334155; display: flex; justify-content: space-between; padding: 0 20px; }
.heading { padding-top: 22px; }
.heading h1 { margin: 0; font-size: 25px; line-height: 31px; font-weight: 700; }
.heading p { margin: 2px 0 0; font-size: 17.500px; line-height: 26px; letter-spacing: -0.08px; color: #e8edf3; }
.user { display: flex; align-items: center; gap: 18px; margin-right: 1px; }
.avatar { width: 64px; height: 64px; border-radius: 50%; border: 3px solid #136a98; background: #e2ebf4; color: #000; font: 700 27px "Liberation Sans", sans-serif; letter-spacing: -0.5px; display: flex; align-items: center; justify-content: center; }
.user-text { display: flex; flex-direction: column; padding-top: 2px; }
.user-text b { font-size: 20px; line-height: 29px; }
.user-text span { font-size: 17.500px; line-height: 26px; color: #dce3eb; }
.card { margin: 30px 31px 0 30px; border: 1px solid #253244; border-radius: 20px; box-shadow: 0 10px 30px rgba(9, 12, 28, .45); }
.filter-card { height: 144px; padding: 0 30px; display: flex; align-items: center; background: linear-gradient(90deg, #1a2435, #142032 50%, #0f172a); }
.filter-icon { width: 50px; height: 50px; border-radius: 15px; background: #292f5c; display: flex; align-items: center; justify-content: center; fill: #818cf8; }
.filter-field { margin-left: 20px; }
.filter-field label { display: block; font-size: 17.500px; line-height: 25px; margin-bottom: 5px; color: #bcc8d6; }
.select { width: 97px; height: 52px; border: 1px solid #475569; border-radius: 15px; background: #1e293b; font-size: 20px; display: flex; align-items: center; padding-left: 15px; }
.hint { margin-left: auto; height: 47px; width: 413px; border: 1px solid #253244; border-radius: 10px; background: #162032; display: flex; align-items: center; padding-left: 20px; gap: 14px; font-size: 17.500px; letter-spacing: 0.04px; color: #bcc8d6; fill: #60a5fa; white-space: nowrap; }
.hint a { color: #60a5fa; font-weight: 500; letter-spacing: -0.03px; }
.schedule-card { height: 358px; margin-top: 40px; padding: 30px; background: linear-gradient(165deg, #101829, #131e30 40%, #192133 65%, #1e293b); }
.schedule-head { display: flex; align-items: center; gap: 20px; }
.schedule-icon { width: 56px; height: 70px; border-radius: 15px; background: #1a2d55; fill: #60a5fa; display: flex; align-items: center; justify-content: center; }
h2 { margin: 0; font-size: 30px; font-weight: 700; background: linear-gradient(90deg, #60a5fa, #67e8f9); -webkit-background-clip: text; background-clip: text; color: transparent; }
.schedule { margin-top: 30px; width: 1478px; border-collapse: collapse; table-layout: fixed; }
.c-time { width: 175px; } .c-mon { width: 257px; } .c-tue { width: 171px; } .c-wed { width: 206px; } .c-thu { width: 182px; } .c-fri { width: 148px; } .c-sat { width: 177px; } .c-sun { width: 161px; }
.schedule th, .schedule td { border: 1px solid rgba(71, 85, 105, .55); padding: 0; }
.schedule thead tr { background: linear-gradient(90deg, #1f2a3b, #334155); }
.schedule th { height: 68px; font-size: 20px; font-weight: 700; }
.schedule th:first-child { background: radial-gradient(circle at 100% 100%, transparent 14.500px, #141d2d 15px) left top / 15px 15px no-repeat; }
.schedule th:last-child { background: radial-gradient(circle at 0 100%, transparent 14.500px, #182335 15px) right top / 15px 15px no-repeat; }
.schedule td { height: 127px; }
.day { display: flex; align-items: center; justify-content: center; gap: 11px; padding-left: 1px; }
.day svg { width: 24px; height: 24px; }
.time { display: flex; flex-direction: column; align-items: center; padding: 3px 0 0 3px; }
.from { display: flex; align-items: center; gap: 7px; font-size: 20px; line-height: 28px; font-weight: 700; color: #fff; }
.to { display: flex; align-items: center; gap: 5px; font-size: 15px; line-height: 26px; font-weight: 500; color: #94a3b8; }
.slot { width: 216px; height: 86px; margin: 0 auto; border: 1px solid #1d3061; border-radius: 10px; background: #192445; padding: 12px 15px; }
.subject { display: flex; align-items: center; gap: 8px; font-size: 20px; line-height: 30px; font-weight: 700; color: #fff; fill: #93c5fd; white-space: nowrap; }
.lecturer { display: flex; align-items: center; gap: 8px; font-size: 17.500px; line-height: 29px; color: #bcc8d6; fill: #c99f24; }

/* Desktop taskbar */
.taskbar { height: 50px; display: flex; align-items: center; background: linear-gradient(90deg, #231d1c, #22201f 35%, #2d1e20 47%, #2b1c1f 55%, #231f1e 65%, #21201e 80%, #241e1e); font-family: "Open Sans", sans-serif; color: #fff; }
.start { width: 60px; display: flex; justify-content: center; }
.search { width: 360px; height: 50px; background: #333; border: 1px solid #666; display: flex; align-items: center; padding-left: 14px; font-size: 18.500px; letter-spacing: -0.35px; color: #e0e0e0; white-space: nowrap; }
.search span { margin: 0 0 2px 14px; width: 206px; }
.stars { margin-left: 15px; }
.task { width: 62px; height: 50px; display: flex; align-items: center; justify-content: center; position: relative; }
.taskview { width: 63px; padding-right: 3px; }
.task.open::after { content: ""; position: absolute; left: 6px; right: 5px; bottom: 0; height: 3px; background: #76b9ed; }
.task.focused { width: 61px; background: #504846; }
.task.focused::after { left: 0; right: 0; }
.tray { flex: 1; height: 50px; display: flex; align-items: center; justify-content: flex-end; }
.weather { display: flex; align-items: center; font-size: 18px; letter-spacing: -0.4px; white-space: nowrap; }
.weather span:nth-of-type(1) { width: 48px; margin-left: 10px; }
.weather span:nth-of-type(2) { width: 94px; }
.tray-icons { display: flex; align-items: center; gap: 12px; margin: 0 0 0 11px; }
.clock { width: 90px; margin-left: 1px; display: flex; flex-direction: column; align-items: center; font-size: 15px; line-height: 23px; letter-spacing: -0.4px; }
.notif { margin-left: 13px; }
.peek { width: 1px; height: 50px; margin: 0 6px 0 25px; background: #777; }
```
